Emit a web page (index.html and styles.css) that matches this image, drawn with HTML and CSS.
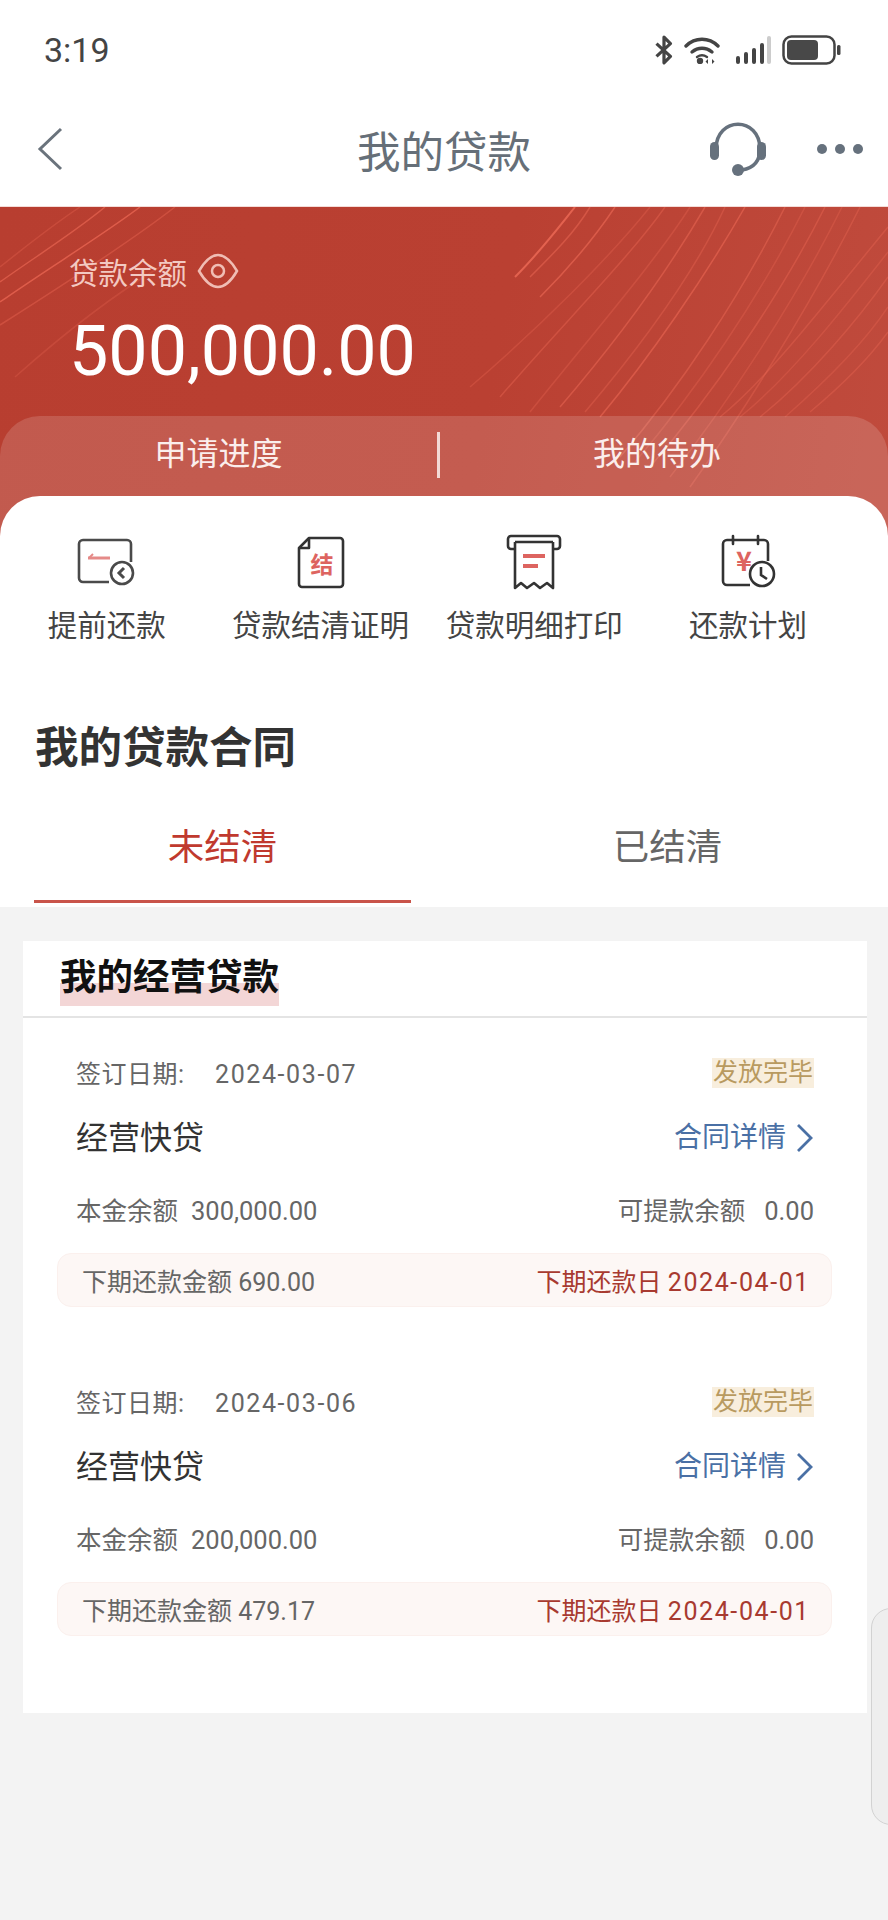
FILE: index.html
```html
<!DOCTYPE html>
<html lang="zh-CN">
  <head>
    <meta charset="utf-8" />
    <meta name="viewport" content="width=device-width, initial-scale=1" />
    <title>我的贷款</title>
    <link rel="stylesheet" href="styles.css">
  </head>
  <body>
    <div class="status-bar">
      <span class="time">3:19</span>
      <div class="status-icons">
        <svg class="ic-bt" width="20" height="30" viewBox="0 0 18 28" fill="none" stroke="#444" stroke-width="3" stroke-linejoin="round"><path d="M2 8l13 12-6 6V2l6 6L2 20"/></svg>
        <svg class="ic-wifi" width="36" height="28" viewBox="0 0 36 28"><g fill="none" stroke="#444" stroke-width="3.400" stroke-linecap="round"><path d="M2 10C11 1 25 1 34 10"/><path d="M8 16c6-5 14-5 20 0"/><path d="M13 21c3-2 7-2 10 0" stroke-width="2.400"/></g><circle cx="16" cy="25" r="3.200" fill="#444"/><path d="M24 23v5l-2.500-2.500zM28 23v5l2.500-2.500z" fill="#444"/></svg>
        <svg class="ic-signal" width="36" height="28" viewBox="0 0 36 28"><g fill="none" stroke="#444" stroke-width="4" stroke-linecap="round"><path d="M3 22v4M11 18v8M19 14v12M27 9v17"/></g><path d="M34 2v24" stroke="#ccc" stroke-width="4" stroke-linecap="round"/></svg>
        <svg class="ic-battery" width="60" height="30" viewBox="0 0 60 30"><rect x="1.500" y="1.500" width="51" height="27" rx="8" fill="none" stroke="#444" stroke-width="2.500"/><rect x="5" y="5" width="31" height="20" rx="4" fill="#484848"/><rect x="55" y="10" width="3.500" height="10" rx="1.500" fill="#444"/></svg>
      </div>
    </div>

    <div class="nav-bar">
      <svg class="nav-back" width="26" height="44" viewBox="0 0 26 44" fill="none" stroke="#6a737c" stroke-width="3"><path d="M24 2L3 22l21 20"/></svg>
      <h1 class="nav-title">我的贷款</h1>
      <svg class="nav-service" width="58" height="56" viewBox="0 0 58 56"><path d="M7 28C7 -5 51 -5 51 28C51 40 45 47 33 49" fill="none" stroke="#66717d" stroke-width="3.500"/><rect x="1" y="21" width="9" height="18" rx="4.500" fill="#66717d"/><rect x="48" y="21" width="9" height="18" rx="4.500" fill="#66717d"/><circle cx="29" cy="49" r="6" fill="#66717d"/></svg>
      <div class="nav-more"><i></i><i></i><i></i></div>
    </div>

    <section class="hero">
      <svg class="hero-lines" width="888" height="330" viewBox="0 0 888 330" fill="none" stroke="#ee6a56" stroke-width="1.500">
        <path d="M0 95C50 60 100 30 140 0" opacity=".7"/>
        <path d="M0 75C35 50 75 25 105 0" opacity=".6"/>
        <path d="M0 118C60 80 130 35 175 0" opacity=".4"/>
        <path d="M0 60C25 40 50 20 80 0" opacity=".3"/>
        <path d="M15 170C60 130 110 90 160 60" opacity=".25"/>
        <path d="M515 70C540 45 555 25 575 0" opacity=".8" stroke-width="2"/>
        <path d="M530 70C555 45 575 25 590 0" opacity=".5"/>
        <path d="M540 90C570 60 595 30 615 0" opacity=".6"/>
        <path d="M470 180C540 120 610 50 650 0" opacity=".3"/>
        <path d="M500 190C560 120 630 50 665 0" opacity=".4"/>
        <path d="M530 205C590 130 655 55 690 0" opacity=".3"/>
        <path d="M560 200C620 130 670 60 705 0" opacity=".5"/>
        <path d="M585 205C640 140 695 65 725 0" opacity=".35"/>
        <path d="M600 210C650 150 705 70 745 0" opacity=".55"/>
        <path d="M620 250C680 180 740 90 785 0" opacity=".45"/>
        <path d="M635 255C695 185 760 90 805 0" opacity=".3"/>
        <path d="M650 260C710 190 780 90 825 0" opacity=".4"/>
        <path d="M670 270C725 200 795 95 842 0" opacity=".3"/>
        <path d="M690 280C740 210 810 100 860 0" opacity=".35"/>
        <path d="M720 210C770 170 830 90 888 20" opacity=".35"/>
        <path d="M740 210C790 170 845 100 888 45" opacity=".3"/>
        <path d="M760 210C810 170 860 110 888 70" opacity=".35"/>
        <path d="M785 210C825 175 865 135 888 100" opacity=".3"/>
        <path d="M810 205C840 180 870 150 888 125" opacity=".35"/>
      </svg>
      <div class="balance-label">贷款余额
        <svg width="42" height="36" viewBox="0 0 42 36" fill="none" stroke="#f0bdb4" stroke-width="2.500"><path d="M2 18C9 6 15 2 21 2s12 4 19 16c-7 12-13 16-19 16S9 30 2 18z"/><circle cx="21" cy="18" r="6"/></svg>
      </div>
      <div class="balance-amount">500,000.00</div>
      <div class="hero-tabs">
        <span>申请进度</span>
        <i class="hero-divider"></i>
        <span>我的待办</span>
      </div>
    </section>

    <section class="sheet">
      <div class="shortcuts">
        <div class="shortcut">
          <svg width="60" height="60" viewBox="0 0 60 60" fill="none" stroke="#4a4a4a" stroke-width="2.600">
            <path d="M32 50H6a4 4 0 0 1-4-4V12a4 4 0 0 1 4-4h44a4 4 0 0 1 4 4v18"/>
            <circle cx="45" cy="41" r="11"/><path d="M47 36l-5 5 5 5" stroke-width="3"/>
            <path d="M11 26h22" stroke="#e58a88" stroke-width="3"/><path d="M16 22l-4 4" stroke="#e58a88" stroke-width="2"/>
          </svg>
          <span>提前还款</span>
        </div>
        <div class="shortcut">
          <svg width="60" height="60" viewBox="0 0 60 60" fill="none" stroke="#333" stroke-width="2.600" stroke-linejoin="round">
            <path d="M18 6H49a3 3 0 0 1 3 3V52a3 3 0 0 1-3 3H11a3 3 0 0 1-3-3V16z"/><path d="M18 6v10H8"/>
            <text class="icon-glyph" x="31" y="41" font-size="23">结</text>
          </svg>
          <span>贷款结清证明</span>
        </div>
        <div class="shortcut">
          <svg width="60" height="60" viewBox="0 0 60 60" fill="none" stroke="#333" stroke-width="2.600" stroke-linejoin="round">
            <path d="M11 17H7a3 3 0 0 1-3-3V7a3 3 0 0 1 3-3H53a3 3 0 0 1 3 3v7a3 3 0 0 1-3 3h-4"/>
            <path d="M11 10H49"/>
            <path d="M11 10V56l6-5 6 5 7-5 6 5 7-5 6 5V10"/>
            <path d="M19 24h22M19 34h15" stroke="#dd6460" stroke-width="4"/>
          </svg>
          <span>贷款明细打印</span>
        </div>
        <div class="shortcut">
          <svg width="60" height="60" viewBox="0 0 60 60" fill="none" stroke="#333" stroke-width="2.600">
            <path d="M32 53H9a4 4 0 0 1-4-4V12a4 4 0 0 1 4-4H46a4 4 0 0 1 4 4V29"/>
            <path d="M15 4v8M40 4v8" stroke-linecap="round"/>
            <text class="icon-glyph" x="26" y="39" font-size="27">¥</text>
            <circle cx="44" cy="42" r="12" fill="#fff"/><path d="M43 35v8l6 4"/>
          </svg>
          <span>还款计划</span>
        </div>
      </div>

      <h2 class="section-title">我的贷款合同</h2>

      <div class="tabs">
        <div class="tab active">未结清</div>
        <div class="tab">已结清</div>
      </div>
    </section>

    <section class="card">
      <div class="card-head"><span>我的经营贷款</span></div>

      <div class="card-body">
        <div class="loan">
          <div class="row row-date">
            <div class="date"><span class="date-label">签订日期:</span><span class="num-wide">2024-03-07</span></div>
            <span class="badge">发放完毕</span>
          </div>
          <div class="row row-name">
            <span class="loan-name">经营快贷</span>
            <span class="link">合同详情
              <svg width="18" height="30" viewBox="0 0 18 30" fill="none" stroke="#4a70a5" stroke-width="2.800"><path d="M2 2l13 13L2 28"/></svg>
            </span>
          </div>
          <div class="row row-amount">
            <div class="amount"><span>本金余额</span><span>300,000.00</span></div>
            <div class="amount amount-right"><span>可提款余额</span><span>0.00</span></div>
          </div>
          <div class="row next-pay">
            <span>下期还款金额 690.00</span>
            <span class="next-date">下期还款日 <span class="num-wide">2024-04-01</span></span>
          </div>
        </div>

        <div class="loan">
          <div class="row row-date">
            <div class="date"><span class="date-label">签订日期:</span><span class="num-wide">2024-03-06</span></div>
            <span class="badge">发放完毕</span>
          </div>
          <div class="row row-name">
            <span class="loan-name">经营快贷</span>
            <span class="link">合同详情
              <svg width="18" height="30" viewBox="0 0 18 30" fill="none" stroke="#4a70a5" stroke-width="2.800"><path d="M2 2l13 13L2 28"/></svg>
            </span>
          </div>
          <div class="row row-amount">
            <div class="amount"><span>本金余额</span><span>200,000.00</span></div>
            <div class="amount amount-right"><span>可提款余额</span><span>0.00</span></div>
          </div>
          <div class="row next-pay">
            <span>下期还款金额 479.17</span>
            <span class="next-date">下期还款日 <span class="num-wide">2024-04-01</span></span>
          </div>
        </div>
      </div>
    </section>

    <div class="side-handle"></div>
  </body>
</html>
```

FILE: styles.css
```css
* {
  box-sizing: border-box;
}
html,
body {
  margin: 0;
  padding: 0;
}
body {
  position: relative;
  width: 888px;
  height: 1920px;
  overflow: hidden;
  background-color: #f3f3f3;
  font-family: Roboto, "Noto Sans CJK SC", sans-serif;
  color: #333;
}

/* status bar */
.status-bar {
  height: 94px;
  padding: 6px 46px 0 44px;
  display: flex;
  justify-content: space-between;
  align-items: center;
  background-color: #fff;
}
.time {
  font-size: 34px;
  color: #444;
}
.status-icons {
  display: flex;
  align-items: center;
}
.ic-bt {
  margin-right: 10px;
}
.ic-signal {
  margin: 0 11px 0 15px;
}

/* nav */
.nav-bar {
  height: 113px;
  padding: 0 25px 2px 37px;
  display: flex;
  align-items: center;
  background-color: #fff;
  border-bottom: 1px solid #f4dcd8;
}
.nav-back {
  flex: none;
}
.nav-title {
  flex: 1;
  margin: 0;
  padding-left: 116px;
  text-align: center;
  font-size: 43.500px;
  font-weight: 400;
  color: #666f78;
}
.nav-service {
  flex: none;
  margin-right: 50px;
}
.nav-more {
  display: flex;
  gap: 8px;
}
.nav-more i {
  width: 10px;
  height: 10px;
  border-radius: 50%;
  background-color: #66717d;
}

/* red header */
.hero {
  position: relative;
  height: 330px;
  padding-top: 44px;
  background: linear-gradient(100deg, #b83e30 0%, #ba4032 55%, #c04b3d 100%);
  overflow: hidden;
}
.hero-lines {
  position: absolute;
  top: 0;
  left: 0;
}
.balance-label {
  position: relative;
  height: 40px;
  padding-left: 69px;
  display: flex;
  align-items: center;
  gap: 10px;
  font-size: 29.500px;
  color: #f3c9c2;
}
.balance-amount {
  position: relative;
  margin-top: 20px;
  padding-left: 69px;
  height: 80px;
  line-height: 80px;
  font-size: 70px;
  color: #fff;
}
.hero-tabs {
  position: relative;
  margin-top: 25px;
  height: 121px;
  padding: 0 14px 52px 0;
  display: grid;
  grid-template-columns: 437px 3px 1fr;
  align-items: center;
  text-align: center;
  font-size: 32px;
  color: #fbeeec;
  background-color: rgba(255, 255, 255, 0.15);
  border-radius: 40px 40px 0 0;
}
.hero-divider {
  height: 46px;
  margin-top: 9px;
  background-color: #f3d9d5;
}

/* white sheet */
.sheet {
  position: relative;
  height: 411px;
  margin-top: -41px;
  padding-top: 36px;
  background-color: #fff;
  border-radius: 40px 40px 0 0;
}
.shortcuts {
  width: 855px;
  display: grid;
  grid-template-columns: repeat(4, 1fr);
}
.shortcut {
  display: flex;
  flex-direction: column;
  align-items: center;
  gap: 14px;
  font-size: 29.500px;
  line-height: 40px;
  color: #444;
  white-space: nowrap;
}
.icon-glyph {
  fill: #dd6460;
  stroke: none;
  font-family: "Noto Sans CJK SC", sans-serif;
  font-weight: 700;
  text-anchor: middle;
}
.section-title {
  margin: 75px 0 0;
  padding-left: 35px;
  height: 56px;
  line-height: 56px;
  font-size: 43.500px;
  font-weight: 700;
  color: #333;
}
.tabs {
  margin-top: 44px;
  padding: 0 32px 0 34px;
  display: grid;
  grid-template-columns: 377px 377px;
  column-gap: 68px;
}
.tab {
  height: 82px;
  line-height: 54px;
  text-align: center;
  font-size: 36.500px;
  color: #666;
}
.tab.active {
  color: #c0392e;
  border-bottom: 3px solid #c9544a;
}

/* contract card */
.card {
  margin: 34px 21px 0 23px;
  height: 772px;
  background-color: #fff;
}
.card-head {
  height: 77px;
  padding: 12px 0 0 37px;
  border-bottom: 2px solid #e4e4e4;
}
.card-head span {
  display: block;
  width: fit-content;
  height: 53px;
  line-height: 50px;
  font-size: 36.500px;
  font-weight: 700;
  color: #111;
  background: linear-gradient(transparent 30px, #f3d6d6 30px);
}
.card-body {
  padding-top: 40px;
}
.loan {
  height: 329px;
  padding: 0 53px;
}
.row {
  display: flex;
  justify-content: space-between;
  align-items: center;
}
.row-date {
  height: 30px;
  font-size: 25px;
  color: #666;
}
.date {
  display: flex;
  align-items: baseline;
  margin-top: -2px;
}
.date-label {
  width: 139px;
  letter-spacing: 0.500px;
}
.num-wide {
  letter-spacing: 1.600px;
}
.badge {
  padding: 0 1px;
  line-height: 30px;
  color: #b89a60;
  background-color: #f8eedd;
}
.row-name {
  height: 40px;
  margin-top: 28px;
  padding-bottom: 2px;
}
.loan-name {
  font-size: 32px;
  color: #333;
}
.link {
  display: flex;
  align-items: center;
  gap: 10px;
  font-size: 28px;
  color: #4a70a5;
}
.link svg {
  margin-top: 5px;
}
.row-amount {
  height: 34px;
  margin-top: 35px;
  font-size: 25.500px;
  color: #666;
}
.amount {
  display: flex;
  align-items: baseline;
  gap: 13px;
}
.amount-right {
  gap: 19px;
}
.next-pay {
  height: 54px;
  margin: 28px -18px 0 -19px;
  padding: 0 21px 0 24px;
  font-size: 25px;
  color: #666;
  background-color: #fdf7f5;
  border: 1px solid #fbf0ed;
  border-radius: 14px;
}
.next-date {
  color: #a83a30;
}

/* floating handle on the right edge */
.side-handle {
  position: absolute;
  top: 1608px;
  left: 871px;
  width: 40px;
  height: 217px;
  background-color: rgba(235, 235, 235, 0.7);
  border: 1px solid #d2d2d2;
  border-radius: 26px;
}
```
